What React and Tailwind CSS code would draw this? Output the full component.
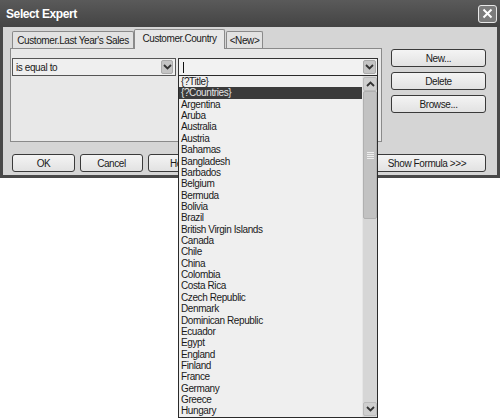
import React from 'react'

const countries = [
  "{?Title}", "{?Countries}", "Argentina", "Aruba", "Australia", "Austria", "Bahamas",
  "Bangladesh", "Barbados", "Belgium", "Bermuda", "Bolivia", "Brazil",
  "British Virgin Islands", "Canada", "Chile", "China", "Colombia", "Costa Rica",
  "Czech Republic", "Denmark", "Dominican Republic", "Ecuador", "Egypt", "England",
  "Finland", "France", "Germany", "Greece", "Hungary",
];

const Chevron = ({ up }) => (
  <svg width="9" height="6" viewBox="0 0 9 6">
    <polyline
      points={up ? "1,5 4.5,1.5 8,5" : "1,1 4.5,4.5 8,1"}
      fill="none"
      stroke="#333"
      strokeWidth="1.8"
    />
  </svg>
);

const Btn = ({ children, className = "" }) => (
  <div
    className={`h-[18px] flex items-center justify-center rounded-[3px] border border-[#3a3a3a] bg-gradient-to-b from-[#f4f4f4] to-[#e2e2e2] text-[10px] tracking-[-0.4px] text-[#1a1a1a] ${className}`}
  >
    {children}
  </div>
);

const App = () => {
  return (
    <div
      className="relative w-[500px] h-[419px] bg-white overflow-hidden"
      style={{ fontFamily: '"Liberation Sans", Arial, sans-serif' }}
    >
      {/* WINDOW */}
      <div className="h-[178px] flex flex-col bg-[#484848] rounded-t-[5px]">
        {/* TITLE BAR */}
        <div className="h-[27px] flex items-center justify-between pl-[6px] pr-[3px] bg-gradient-to-b from-[#5a5a5a] to-[#444]">
          <span className="text-white font-bold text-[12px] tracking-[-0.4px]">Select Expert</span>
          <div className="w-[19px] h-[18px] flex items-center justify-center rounded-[3px] border border-[#e8e8e8] bg-[#7c7c7c]">
            <svg width="11" height="11" viewBox="0 0 11 11">
              <path d="M1.5 1.5 L9.5 9.5 M9.5 1.5 L1.5 9.5" stroke="#fff" strokeWidth="2" />
            </svg>
          </div>
        </div>

        {/* BODY */}
        <div className="flex-1 mx-[3px] mb-[3px] bg-[#d5d5d5] pl-[7px] pt-[1px] pr-[11px] flex flex-col">
          <div className="flex">
            <div className="w-[372px] flex flex-col">
              {/* TABS */}
              <div className="h-[20px] flex items-end text-[10px] tracking-[-0.4px] text-[#1a1a1a]">
                <div className="ml-[2px] h-[17px] w-[122px] flex items-center justify-center border border-b-0 border-[#8a8a8a] rounded-t-[2px] bg-[#e2e2e2]">
                  Customer.Last Year's Sales
                </div>
                <div className="h-[20px] w-[91px] flex items-center justify-center border border-b-0 border-[#8a8a8a] rounded-t-[2px] bg-[#e8e8e8] pb-[3px] -mb-[1px] relative z-10">
                  Customer.Country
                </div>
                <div className="ml-[1px] h-[17px] w-[37px] flex items-center justify-center border border-b-0 border-[#8a8a8a] rounded-t-[2px] bg-[#e2e2e2]">
                  &lt;New&gt;
                </div>
              </div>

              {/* PANEL */}
              <div className="h-[94px] border border-[#8a8a8a] bg-[#e8e8e8] pt-[9px] pl-[1px] flex gap-[2px]">
                <div className="w-[164px] h-[18px] border border-[#555] bg-[#efefef] flex items-center justify-between pl-[3px] pr-[2px]">
                  <span className="text-[10px] tracking-[-0.4px] text-[#1a1a1a]">is equal to</span>
                  <div className="w-[12px] h-[14px] bg-[#c4c4c4] border border-[#aaa] rounded-[2px] flex items-center justify-center">
                    <Chevron />
                  </div>
                </div>
                <div className="w-[200px] h-[18px] border border-[#333] bg-[#f2f2f2] flex items-center justify-between pl-[4px] pr-[1px]">
                  <div className="w-[1px] h-[11px] bg-[#111]" />
                  <div className="w-[13px] h-[14px] bg-[#c4c4c4] border border-[#aaa] rounded-[2px] flex items-center justify-center">
                    <Chevron />
                  </div>
                </div>
              </div>
            </div>

            {/* RIGHT BUTTONS */}
            <div className="ml-[9px] w-[95px] pt-[21px] flex flex-col gap-[5px]">
              <Btn>New...</Btn>
              <Btn>Delete</Btn>
              <Btn>Browse...</Btn>
            </div>
          </div>

          {/* BOTTOM BUTTONS */}
          <div className="mt-[12px] flex gap-[5px] ml-[2px]">
            <Btn className="w-[63px]">OK</Btn>
            <Btn className="w-[63px]">Cancel</Btn>
            <Btn className="w-[63px]">Help</Btn>
            <Btn className="w-[118px] ml-auto">Show Formula &gt;&gt;&gt;</Btn>
          </div>
        </div>
      </div>

      {/* DROPDOWN LIST */}
      <div className="absolute left-[178px] top-[75px] w-[200px] h-[343px] border border-[#2a2a2a] bg-[#efefef] flex">
        <div className="flex-1 flex flex-col">
          {countries.map((c, i) => (
            <div
              key={c}
              className={`h-[11.37px] leading-[11.37px] pl-[2px] text-[10px] tracking-[-0.4px] whitespace-nowrap ${
                i === 1 ? "bg-[#3b3b3b] text-[#e4e4e4]" : "text-[#1a1a1a]"
              }`}
            >
              {c}
            </div>
          ))}
        </div>

        {/* SCROLLBAR */}
        <div className="w-[15px] flex flex-col bg-[#dadada] border-l border-[#e6e6e6]">
          <div className="h-[14px] mt-[1px] flex items-center justify-center bg-[#cfcfcf] border border-[#bbb] rounded-[2px]">
            <Chevron up />
          </div>
          <div className="h-[128px] bg-[#c2c2c2] border border-[#b0b0b0] rounded-[2px] flex items-center justify-center">
            <div className="flex flex-col gap-[1px]">
              <div className="w-[7px] h-[1px] bg-[#eee]" />
              <div className="w-[7px] h-[1px] bg-[#eee]" />
              <div className="w-[7px] h-[1px] bg-[#eee]" />
              <div className="w-[7px] h-[1px] bg-[#eee]" />
            </div>
          </div>
          <div className="flex-1 bg-[#d6d6d6]" />
          <div className="h-[14px] mb-[1px] flex items-center justify-center bg-[#cfcfcf] border border-[#bbb] rounded-[2px]">
            <Chevron />
          </div>
        </div>
      </div>
    </div>
  );
};

export default App;
